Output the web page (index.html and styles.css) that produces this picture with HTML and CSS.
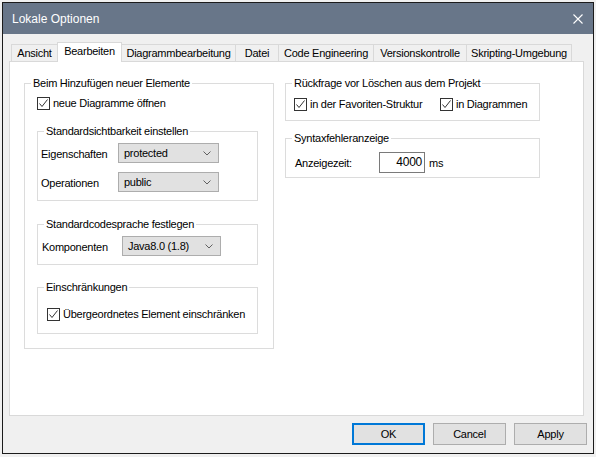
FILE: index.html
```html
<!DOCTYPE html>
<html lang="de">
<head>
<meta charset="utf-8">
<title>Lokale Optionen</title>
<link rel="stylesheet" href="styles.css">
</head>
<body>
<div class="window">
  <div class="titlebar">
    <span class="title">Lokale Optionen</span>
    <span class="close"><svg width="10" height="10" viewBox="0 0 10 10"><path d="M0.5 0.5 L9.5 9.5 M9.5 0.5 L0.5 9.5" stroke="#ffffff" stroke-width="1.1" fill="none"/></svg></span>
  </div>
  <div class="content">
    <div class="tabs">
      <div class="tab w-ansicht">Ansicht</div>
      <div class="tab tab-active w-bearb">Bearbeiten</div>
      <div class="tab w-diag">Diagrammbearbeitung</div>
      <div class="tab w-datei">Datei</div>
      <div class="tab w-code">Code Engineering</div>
      <div class="tab w-vers">Versionskontrolle</div>
      <div class="tab w-skript">Skripting-Umgebung</div>
    </div>
    <div class="panel">
      <div class="col col-left">
        <div class="group g-add">
          <div class="group-title">Beim Hinzufügen neuer Elemente</div>
          <div class="group-body b-add">
            <label class="check"><span class="box"><svg width="11" height="11" viewBox="0 0 11 11"><polyline points="1.5,5.5 4,8.5 9.5,1.5" fill="none" stroke="#333" stroke-width="1"/></svg></span>neue Diagramme öffnen</label>
            <div class="group g-vis">
              <div class="group-title">Standardsichtbarkeit einstellen</div>
              <div class="group-body b-vis">
                <div class="row">
                  <span class="lbl lbl-vis">Eigenschaften</span>
                  <span class="select sel-vis"><span>protected</span><svg width="8" height="5" viewBox="0 0 8 5"><polyline points="0.5,0.5 4,4 7.5,0.5" fill="none" stroke="#606060" stroke-width="1"/></svg></span>
                </div>
                <div class="row row-second">
                  <span class="lbl lbl-vis">Operationen</span>
                  <span class="select sel-vis"><span>public</span><svg width="8" height="5" viewBox="0 0 8 5"><polyline points="0.5,0.5 4,4 7.5,0.5" fill="none" stroke="#606060" stroke-width="1"/></svg></span>
                </div>
              </div>
            </div>
            <div class="group g-code">
              <div class="group-title">Standardcodesprache festlegen</div>
              <div class="group-body b-code">
                <div class="row">
                  <span class="lbl lbl-code">Komponenten</span>
                  <span class="select sel-code"><span>Java8.0 (1.8)</span><svg width="8" height="5" viewBox="0 0 8 5"><polyline points="0.5,0.5 4,4 7.5,0.5" fill="none" stroke="#606060" stroke-width="1"/></svg></span>
                </div>
              </div>
            </div>
            <div class="group g-restrict">
              <div class="group-title">Einschränkungen</div>
              <div class="group-body b-restrict">
                <label class="check"><span class="box"><svg width="11" height="11" viewBox="0 0 11 11"><polyline points="1.5,5.5 4,8.5 9.5,1.5" fill="none" stroke="#333" stroke-width="1"/></svg></span>Übergeordnetes Element einschränken</label>
              </div>
            </div>
          </div>
        </div>
      </div>
      <div class="col col-right">
        <div class="group g-confirm">
          <div class="group-title">Rückfrage vor Löschen aus dem Projekt</div>
          <div class="group-body b-confirm">
            <label class="check check-fav"><span class="box"><svg width="11" height="11" viewBox="0 0 11 11"><polyline points="1.5,5.5 4,8.5 9.5,1.5" fill="none" stroke="#333" stroke-width="1"/></svg></span>in der Favoriten-Struktur</label>
            <label class="check"><span class="box"><svg width="11" height="11" viewBox="0 0 11 11"><polyline points="1.5,5.5 4,8.5 9.5,1.5" fill="none" stroke="#333" stroke-width="1"/></svg></span>in Diagrammen</label>
          </div>
        </div>
        <div class="group g-syntax">
          <div class="group-title">Syntaxfehleranzeige</div>
          <div class="group-body b-syntax">
            <span class="lbl lbl-time">Anzeigezeit:</span>
            <span class="numbox">4000</span>
            <span class="unit">ms</span>
          </div>
        </div>
      </div>
    </div>
  </div>
  <div class="footer">
    <button class="btn btn-default">OK</button>
    <button class="btn">Cancel</button>
    <button class="btn">Apply</button>
  </div>
</div>
</body>
</html>
```

FILE: styles.css
```css
html, body {
  margin: 0;
  padding: 0;
}
body {
  background: #f0f0f0;
  width: 596px;
  height: 457px;
  overflow: hidden;
  font-family: "Liberation Sans", Arial, sans-serif;
  font-size: 11px;
  letter-spacing: -0.25px;
  color: #000;
}
.window {
  margin: 2px 0 0 2px;
  width: 592px;
  height: 452px;
  box-sizing: border-box;
  border: 1px solid #1b1b1b;
  background: #f0f0f0;
  display: flex;
  flex-direction: column;
}
.titlebar {
  height: 31px;
  flex: none;
  background: #687689;
  display: flex;
  align-items: center;
  justify-content: space-between;
  padding: 0 10px 0 9px;
}
.title {
  color: #ffffff;
  font-size: 12px;
  letter-spacing: 0;
  padding-top: 1px;
}
.close {
  display: flex;
  width: 10px;
  height: 10px;
}
.content {
  padding: 8px 9px 0 6px;
  flex: none;
}
.tabs {
  display: flex;
  align-items: flex-end;
  height: 19px;
  margin-left: 2px;
}
.tab {
  box-sizing: border-box;
  height: 17px;
  border: 1px solid #d9d9d9;
  border-bottom: none;
  border-right: none;
  background: #f0f0f0;
  text-align: center;
  line-height: 16px;
  white-space: nowrap;
}
.w-skript { border-right: 1px solid #d9d9d9; }
.tab-active {
  height: 20px;
  margin-bottom: -1px;
  background: #ffffff;
  border-right: 1px solid #d9d9d9;
  position: relative;
  z-index: 1;
  line-height: 16px;
}
.tab-active + .tab { border-left: none; }
.w-ansicht { width: 46px; }
.w-bearb { width: 65px; }
.w-diag { width: 113px; }
.w-datei { width: 43px; }
.w-code { width: 95px; }
.w-vers { width: 93px; }
.w-skript { width: 106px; }
.panel {
  box-sizing: border-box;
  width: 575px;
  height: 355px;
  background: #ffffff;
  border: 1px solid #d9d9d9;
  display: flex;
  align-items: flex-start;
  gap: 11px;
  padding: 21px 0 0 14px;
}
.col-left { width: 250px; }
.col-right {
  width: 255px;
  display: flex;
  flex-direction: column;
  gap: 17px;
}
.group {
  box-sizing: border-box;
  border: 1px solid #dcdcdc;
  background: #ffffff;
}
.group-title {
  width: fit-content;
  margin: -7px 0 0 6px;
  padding: 0 2px;
  height: 13px;
  line-height: 13px;
  background: #ffffff;
  white-space: nowrap;
}
.b-add { padding: 7px 14px 14px 12px; }
.g-vis { width: 221px; margin-top: 21px; }
.b-vis { padding: 5px 0 8px 3px; }
.g-code { width: 221px; margin-top: 23px; }
.b-code { padding: 5px 0 8px 4px; }
.g-restrict { width: 221px; margin-top: 22px; }
.b-restrict { padding: 14px 0 12px 9px; }
.b-confirm {
  padding: 8px 0 9px 8px;
  display: flex;
}
.b-syntax {
  padding: 7px 0 4px 9px;
  display: flex;
  align-items: center;
}
.check {
  display: flex;
  align-items: center;
  height: 13px;
  line-height: 13px;
  white-space: nowrap;
}
.box {
  box-sizing: border-box;
  width: 13px;
  height: 13px;
  border: 1px solid #333333;
  background: #ffffff;
  margin-right: 3px;
  display: flex;
  align-items: center;
  justify-content: center;
  flex: none;
}
.check-fav { width: 146px; }
.row {
  display: flex;
  align-items: center;
  height: 20px;
}
.row-second { margin-top: 9px; }
.lbl { white-space: nowrap; }
.lbl-vis { width: 77px; padding-top: 2px; }
.lbl-code { width: 80px; padding-top: 2px; }
.lbl-time { width: 84px; }
.select {
  box-sizing: border-box;
  height: 20px;
  background: #e1e1e1;
  border: 1px solid #adadad;
  display: flex;
  align-items: center;
  justify-content: space-between;
  padding: 0 7px 0 5px;
}
.select svg { flex: none; }
.sel-vis { width: 101px; }
.sel-code { width: 99px; }
.numbox {
  box-sizing: border-box;
  width: 46px;
  height: 21px;
  border: 1px solid #7a7a7a;
  background: #ffffff;
  text-align: right;
  padding-right: 2px;
  line-height: 18px;
  font-size: 12px;
}
.unit { margin-left: 4px; }
.footer {
  flex: none;
  display: flex;
  justify-content: flex-end;
  gap: 8px;
  padding: 7px 6px 8px 0;
}
.btn {
  box-sizing: border-box;
  width: 73px;
  height: 22px;
  margin: 0;
  padding: 0;
  background: #e1e1e1;
  border: 1px solid #adadad;
  font-family: "Liberation Sans", Arial, sans-serif;
  font-size: 11px;
  letter-spacing: -0.25px;
  color: #000;
}
.btn-default {
  border: 2px solid #0078d7;
}
```
